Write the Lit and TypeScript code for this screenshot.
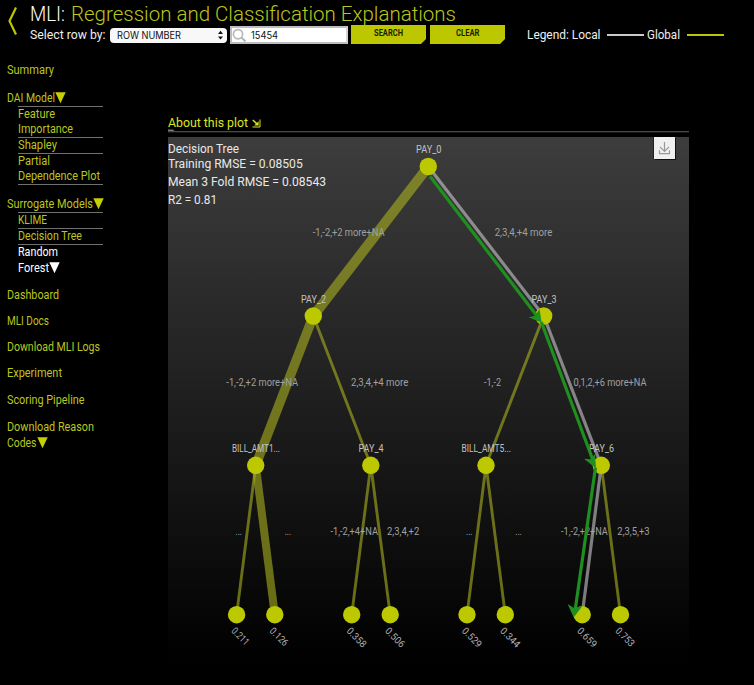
import { LitElement, html, svg, css, nothing } from "lit";
import { customElement, property } from "lit/decorators.js";

@customElement("fit-text")
class FitText extends LitElement {
  @property() text = "";
  @property({ type: Number }) w = 50;
  @property({ type: Number }) size = 12;
  @property({ type: Number }) h = 15;
  @property({ type: Number }) base = 11;
  static styles = css`
    :host { display: block; flex: none; font-family: Roboto, "Liberation Sans", sans-serif; }
    svg { display: block; overflow: visible; }
    text { fill: currentColor; }
  `;
  render() {
    return html`<svg width=${this.w} height=${this.h}>
      <text x="0" y=${this.base} font-size=${this.size} textLength=${this.w} lengthAdjust="spacingAndGlyphs">${this.text}</text>
    </svg>`;
  }
}

const fit = (text: string, w: number, size = 12, h = 15, base = 11.4) =>
  html`<fit-text .text=${text} .w=${w} .size=${size} .h=${h} .base=${base}></fit-text>`;

const caret = html`<svg class="caret" width="11" height="15"><path d="M0.3 1.2H10.7L5.5 12.2Z" fill="currentColor"/></svg>`;

type Line = [text: string, width: number];

@customElement("mli-sidebar")
class MliSidebar extends LitElement {
  static styles = css`
    :host { display: block; width: 97px; color: #bcc61e; }
    .row { display: flex; }
    .group { margin-left: 11px; width: 85px; }
    .item { border-top: 1px solid #70706c; }
    .last { border-bottom: 1px solid #70706c; }
    .active { color: #fff; }
    .s11 { margin-top: 11px; }
    .s12 { margin-top: 12px; }
    .s13 { margin-top: 13px; }
    .next { margin-top: 1px; }
    .caret { display: block; color: #c6cf00; }
    .active .caret { color: #fff; }
  `;
  item(lines: Line[], cls = "") {
    return html`<div class="item ${cls}">${lines.map(([t, w], i) =>
      html`<div class="row ${cls === "active" && i === 1 ? "next" : ""}">${fit(t, w)}${cls === "active" && i === 1 ? caret : nothing}</div>`)}</div>`;
  }
  render() {
    return html`
      <div class="row">${fit("Summary", 47)}</div>
      <div class="row s13">${fit("DAI Model", 48)}${caret}</div>
      <div class="group">
        ${this.item([["Feature", 37], ["Importance", 55]])}
        ${this.item([["Shapley", 39]])}
        ${this.item([["Partial", 32], ["Dependence Plot", 82]], "last")}
      </div>
      <div class="row s12">${fit("Surrogate Models", 86)}${caret}</div>
      <div class="group">
        ${this.item([["KLIME", 29]])}
        ${this.item([["Decision Tree", 64]])}
        ${this.item([["Random", 40], ["Forest", 31]], "active")}
      </div>
      <div class="row s12">${fit("Dashboard", 52)}</div>
      <div class="row s11">${fit("MLI Docs", 42)}</div>
      <div class="row s11">${fit("Download MLI Logs", 93)}</div>
      <div class="row s11">${fit("Experiment", 55)}</div>
      <div class="row s12">${fit("Scoring Pipeline", 77.5)}</div>
      <div class="row s12">${fit("Download Reason", 87)}</div>
      <div class="row next">${fit("Codes", 29.5)}${caret}</div>`;
  }
}

@customElement("mli-toolbar")
class MliToolbar extends LitElement {
  static styles = css`
    :host { display: flex; height: 60px; background: #000; }
    .back { display: block; margin-left: 7px; width: 23px; flex: none; }
    .body { display: flex; flex-direction: column; }
    .title { display: flex; gap: 6px; height: 25px; color: #fff; font-weight: 300; }
    .accent { color: #bcc61e; }
    .controls { display: flex; height: 19px; color: #eee; }
    .select {
      display: flex; justify-content: space-between; box-sizing: border-box;
      width: 117px; height: 15px; margin: 3px 3px 0 4.5px; padding: 0 3px 0 7px;
      border-radius: 4px; background: #f8f8f8; color: #111;
    }
    .search {
      display: flex; box-sizing: border-box; width: 118px; height: 18px; margin: 1px 3px 0 0;
      border: 2px solid #bdbdbd; border-right-color: #d4d4d4; background: #fff; color: #111; gap: 3px;
    }
    .field { font-family: Inter, "Liberation Sans", sans-serif; }
    .btn {
      display: flex; justify-content: center; width: 75px; height: 19px; margin-right: 4px;
      background: #bcc700; color: #1c1e00;
      clip-path: polygon(0 0, 100% 0, 100% 14px, 70px 100%, 0 100%);
      font-weight: 700;
    }
    .legend { display: flex; margin-left: 17.5px; }
    .stroke { width: 37px; height: 2px; margin: 9px 3px 0 7px; background: #cbc8cc; }
    .stroke.global { background: #bcc700; margin-right: 0; }
    svg { display: block; flex: none; }
    .field fit-text { font-family: Inter, "Liberation Sans", sans-serif; }
  `;
  render() {
    return html`
      <svg class="back" viewBox="0 0 23 40" width="23" height="40">
        <path d="M9 7.5L2.5 21L9 34.5" fill="none" stroke="#bcc700" stroke-width="2.2"/>
      </svg>
      <div class="body">
        <div class="title">${fit("MLI:", 35, 20.8, 25, 21.3)}<div class="accent">${fit("Regression and Classification Explanations", 385, 20.8, 25, 21.3)}</div></div>
        <div class="controls">
          ${fit("Select row by:", 75.5, 12.8, 19, 13.5)}
          <div class="select field">${fit("ROW NUMBER", 64, 9.8, 15, 10.5)}
            <svg width="7" height="15"><path d="M1 6L3.5 2.8L6 6ZM1 8.4L3.5 11.6L6 8.4Z" fill="#111"/></svg>
          </div>
          <div class="search field">
            <svg width="16" height="14"><circle cx="6" cy="6.2" r="4.6" fill="none" stroke="#b8b8b8" stroke-width="1.7"/><path d="M9.5 9.5L13.5 13.5" stroke="#b8b8b8" stroke-width="2.2"/></svg>
            ${fit("15454", 27, 9.8, 14, 10.7)}
          </div>
          <div class="btn">${fit("SEARCH", 29, 8.6, 19, 11.2)}</div>
          <div class="btn">${fit("CLEAR", 23.5, 8.6, 19, 11.2)}</div>
          <div class="legend">
            ${fit("Legend: Local", 73.5, 12.8, 19, 13.5)}<div class="stroke"></div>
            ${fit("Global", 33, 12.8, 19, 13.5)}<div class="stroke global"></div>
          </div>
        </div>
      </div>`;
  }
}

interface Label { t: string; x: number; y: number; w: number }

// Tree coordinates are offset by the plot panel's top left corner.
const OX = 168, OY = 137;
const nodes: [number, number][] = [
  [428.3, 166.5], [313.3, 316], [543.7, 316],
  [255.7, 465.3], [370.8, 465.3], [486, 465.3], [601.3, 465.3],
  [236.6, 614.7], [274.8, 614.7], [351.7, 614.7], [390.2, 614.7],
  [467, 614.7], [505.3, 614.7], [582.2, 614.7], [620.5, 614.7],
];
const edges: [from: number, to: number, width: number, local?: boolean][] = [
  [0, 1, 10], [0, 2, 3.2, true], [1, 3, 9.5], [1, 4, 2.9], [2, 5, 2.9], [2, 6, 3.2, true],
  [3, 7, 2.9], [3, 8, 8], [4, 9, 2.9], [4, 10, 2.9], [5, 11, 2.9], [5, 12, 2.9], [6, 13, 3.2, true], [6, 14, 2.9],
];
const nodeLabels: Label[] = [
  { t: "PAY_0", x: 416, y: 152.8, w: 25.5 },
  { t: "PAY_2", x: 301, y: 302.5, w: 25 },
  { t: "PAY_3", x: 531.5, y: 302.5, w: 25 },
  { t: "BILL_AMT1...", x: 232, y: 452, w: 48 },
  { t: "PAY_4", x: 358.5, y: 452, w: 25 },
  { t: "BILL_AMT5...", x: 461.5, y: 452, w: 49.5 },
  { t: "PAY_6", x: 589, y: 452, w: 25 },
];
const edgeLabels: Label[] = [
  { t: "-1,-2,+2 more+NA", x: 312.7, y: 236, w: 71.8 },
  { t: "2,3,4,+4 more", x: 494.7, y: 236, w: 57.6 },
  { t: "-1,-2,+2 more+NA", x: 226.3, y: 385.6, w: 71.8 },
  { t: "2,3,4,+4 more", x: 351, y: 385.6, w: 57.3 },
  { t: "-1,-2", x: 484, y: 385.6, w: 17 },
  { t: "0,1,2,+6 more+NA", x: 573.5, y: 385.6, w: 73 },
  { t: "...", x: 235.5, y: 535, w: 6.5 },
  { t: "...", x: 284.7, y: 535, w: 6.5 },
  { t: "-1,-2,+4+NA", x: 330.5, y: 535, w: 47.5 },
  { t: "2,3,4,+2", x: 387, y: 535, w: 32.3 },
  { t: "...", x: 466, y: 535, w: 6.5 },
  { t: "...", x: 515.3, y: 535, w: 6.5 },
  { t: "-1,-2,+2+NA", x: 561, y: 535, w: 46.8 },
  { t: "2,3,5,+3", x: 617.3, y: 535, w: 32.3 },
];
const leaves: [string, number][] = [
  ["0.211", 20.5], ["0.126", 21.5], ["0.358", 23.5], ["0.506", 23.5],
  ["0.529", 23.5], ["0.344", 23.5], ["0.659", 23.5], ["0.753", 22.5],
];

@customElement("decision-tree")
class DecisionTree extends LitElement {
  static styles = css`
    :host { display: block; }
    svg { display: block; }
    text { font-family: Roboto, "Liberation Sans", sans-serif; font-size: 10px; }
    .edge { stroke: #a8b020; stroke-opacity: 0.6; }
    .edge.local { stroke: #cbc8cc; }
    .node { fill: #bdc900; }
    .path { stroke: #1f8f1f; stroke-width: 3.2; }
    .head { fill: #1f8f1f; }
    .name { fill: #c2c2c2; }
    .rule { fill: #a0a0a0; }
    .value { fill: #b0b0b0; }
    .stat { font-size: 13px; fill: #e8e8e8; }
  `;
  label(l: Label, cls: string) {
    return svg`<text class=${cls} x=${l.x} y=${l.y} textLength=${l.w} lengthAdjust="spacingAndGlyphs">${l.t}</text>`;
  }
  render() {
    return html`<svg width="521" height="548" viewBox="${OX} ${OY} 521 548">
      ${edges.map(([a, b, w, local]) => svg`<line class=${local ? "edge local" : "edge"} stroke-width=${w}
        x1=${nodes[a][0]} y1=${nodes[a][1]} x2=${nodes[b][0]} y2=${nodes[b][1]}/>`)}
      ${nodes.map(([x, y]) => svg`<circle class="node" cx=${x} cy=${y} r="8.7"/>`)}
      ${edgeLabels.map((l) => this.label(l, "rule"))}
      ${nodeLabels.map((l) => this.label(l, "name"))}
      <line class="path" x1="430.2" y1="176.5" x2="537" y2="316"/>
      <line class="path" x1="541.3" y1="322" x2="592.5" y2="459"/>
      <line class="path" x1="595.5" y1="467.5" x2="575.3" y2="609"/>
      <path class="head" d="M541.6 322.8L528.6 317.3L535 315.7L539.6 309Z"/>
      <path class="head" d="M596 468.4L584 458.8L590.5 459.2L595 454Z"/>
      <path class="head" d="M573.7 617.5L567.6 604L574 608L582.4 606Z"/>
      ${leaves.map(([t, w], i) => svg`<text class="value" textLength=${w} lengthAdjust="spacingAndGlyphs"
        transform="translate(${nodes[7 + i][0] - 5.8} 631.5) rotate(45)">${t}</text>`)}
      ${this.label({ t: "Decision Tree", x: 168, y: 152.8, w: 71 }, "stat")}
      ${this.label({ t: "Training RMSE = 0.08505", x: 168, y: 167.8, w: 134.7 }, "stat")}
      ${this.label({ t: "Mean 3 Fold RMSE = 0.08543", x: 168, y: 186, w: 158 }, "stat")}
      ${this.label({ t: "R2 = 0.81", x: 168, y: 204, w: 49 }, "stat")}
    </svg>`;
  }
}

@customElement("app-root")
class AppRoot extends LitElement {
  static styles = css`
    :host { display: block; height: 685px; background: #000; overflow: hidden; }
    .main { display: flex; }
    mli-sidebar { margin: 3px 64px 0 7px; flex: none; }
    .plot { width: 521px; padding-top: 54px; }
    .about { display: flex; gap: 4px; height: 17px; color: #dfe420; }
    .about svg { display: block; margin-top: 5px; }
    .divider { display: block; height: 6px; overflow: visible; }
    .panel { position: relative; height: 548px; background: linear-gradient(#3d3d3d, #000 96%); }
    .save {
      position: absolute; right: 14px; top: 0; width: 21px; height: 22px;
      background: #f0f0f1; box-shadow: 1px 1px 0 #111, -1px 0 0 #222;
    }
    .save svg { display: block; }
  `;
  render() {
    return html`
      <mli-toolbar></mli-toolbar>
      <div class="main">
        <mli-sidebar></mli-sidebar>
        <div class="plot">
          <div class="about">${fit("About this plot", 80, 12.8, 17, 13)}
            <svg width="9" height="9" fill="none" stroke="currentColor"><path d="M0.8 1L5 5" stroke-width="1.5"/><path d="M6.6 2.2V6.6H2.2Z" fill="currentColor" stroke="none"/><path d="M0.5 8H8V0.5" stroke-width="1"/></svg>
          </div>
          <svg class="divider" width="521" height="6"><path d="M0 -1.5H5L7 0.5H0Z" fill="#777"/><rect y="0" width="521" height="1.3" fill="#4a4a4a"/></svg>
          <div class="panel">
            <decision-tree></decision-tree>
            <div class="save">
              <svg width="21" height="22" fill="none" stroke="#999" stroke-width="1.2"><path d="M10.5 5V14.5M6 9.8L10.5 14.3L15 9.8M5.5 13.3V16.6H15.5V13.3"/></svg>
            </div>
          </div>
        </div>
      </div>`;
  }
}
